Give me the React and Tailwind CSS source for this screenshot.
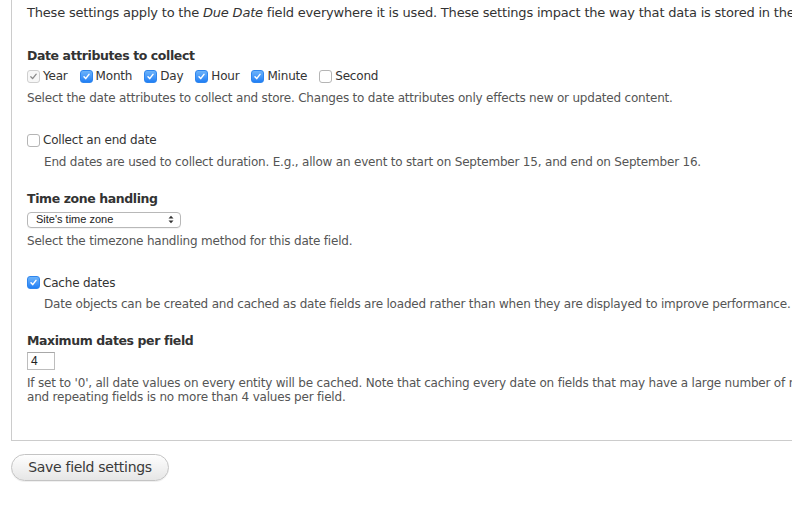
import React from "react"

function Box({ checked, disabled }) {
  if (checked && disabled) {
    return (
      <span className="inline-flex w-[13px] h-[13px] shrink-0 items-center justify-center rounded-[3px] border border-[#cfcfcf] bg-[#f7f7f7]">
        <svg width="9" height="9" viewBox="0 0 9 9">
          <path d="M1.8 4.8 L3.6 6.6 L7.2 2.2" fill="none" stroke="#8a8a8a" strokeWidth="1.3" strokeLinecap="round" strokeLinejoin="round" />
        </svg>
      </span>
    )
  }
  if (checked) {
    return (
      <span className="inline-flex w-[13px] h-[13px] shrink-0 items-center justify-center rounded-[3px] border border-[#2f86ee] bg-gradient-to-b from-[#6cb3fa] to-[#1f7ff5]">
        <svg width="9" height="9" viewBox="0 0 9 9">
          <path d="M2 4.8 L3.7 6.6 L7 2.4" fill="none" stroke="#fff" strokeWidth="1.5" strokeLinecap="round" strokeLinejoin="round" />
        </svg>
      </span>
    )
  }
  return <span className="inline-block w-[13px] h-[13px] shrink-0 rounded-[3px] border border-[#b5b5b5] bg-white" />
}

function Check({ label, checked, disabled }) {
  return (
    <span className="inline-flex items-center gap-[3px]">
      <Box checked={checked} disabled={disabled} />
      <span>{label}</span>
    </span>
  )
}

const ATTRS = [
  { label: "Year", checked: true, disabled: true },
  { label: "Month", checked: true },
  { label: "Day", checked: true },
  { label: "Hour", checked: true },
  { label: "Minute", checked: true },
  { label: "Second", checked: false },
]

export default function App() {
  return (
    <div className="h-[509px] overflow-hidden bg-white text-[#333] font-['Lucida_Grande','DejaVu_Sans',sans-serif] text-[12px] tracking-[-0.2px]">
      <div className="ml-[11px] border-l border-b border-[#cccccc] pl-[15px] pt-[4px] pb-[36px] whitespace-nowrap">
        <p className="text-[13px] leading-[18px]">
          These settings apply to the <em>Due Date</em> field everywhere it is used. These settings impact the way that data is stored in the database and cannot be changed once data has been created.
        </p>

        <h3 className="mt-[25px] text-[12.5px] leading-[18px] font-bold tracking-[-0.4px]">Date attributes to collect</h3>
        <div className="mt-[2px] flex items-center gap-[12px] leading-[18px]">
          {ATTRS.map(a => <Check key={a.label} {...a} />)}
        </div>
        <p className="mt-[4px] leading-[18px] text-[#555]">
          Select the date attributes to collect and store. Changes to date attributes only effects new or updated content.
        </p>

        <div className="mt-[24px] leading-[18px]">
          <Check label="Collect an end date" checked={false} />
        </div>
        <p className="mt-[1px] pl-[17px] leading-[18px] text-[#555]">
          End dates are used to collect duration. E.g., allow an event to start on September 15, and end on September 16.
        </p>

        <h3 className="mt-[19px] text-[12.5px] leading-[18px] font-bold tracking-[-0.4px]">Time zone handling</h3>
        <div className="mt-[4px] flex h-[16px] w-[154px] items-center justify-between rounded-[4px] border border-[#b8b8b8] bg-white pl-[8px] pr-[6px] font-['Liberation_Sans',sans-serif] text-[11px] tracking-normal text-[#222] shadow-[0_1px_0_rgba(0,0,0,0.04)]">
          <span>Site's time zone</span>
          <svg width="6" height="9" viewBox="0 0 6 9">
            <path d="M0.5 3.5 L3 0.8 L5.5 3.5 Z M0.5 5.5 L3 8.2 L5.5 5.5 Z" fill="#333" />
          </svg>
        </div>
        <p className="mt-[4px] leading-[18px] text-[#555]">
          Select the timezone handling method for this date field.
        </p>

        <div className="mt-[24px] leading-[18px]">
          <Check label="Cache dates" checked />
        </div>
        <p className="mt-[3px] pl-[17px] leading-[18px] text-[#555]">
          Date objects can be created and cached as date fields are loaded rather than when they are displayed to improve performance.
        </p>

        <h3 className="mt-[19px] text-[12.5px] leading-[18px] font-bold tracking-[-0.4px]">Maximum dates per field</h3>
        <div className="mt-[2px] flex h-[18px] w-[28px] items-center border border-[#bdbdbd] border-t-[#a8a8a8] pl-[3px] font-['Liberation_Sans',sans-serif] text-[12px] tracking-normal text-[#222]">
          4
        </div>
        <p className="mt-[6px] leading-[14px] text-[#555]">
          If set to '0', all date values on every entity will be cached. Note that caching every date on fields that may have a large number of multiple values
          <br />
          and repeating fields is no more than 4 values per field.
        </p>
      </div>

      <button className="block ml-[11px] mt-[13px] h-[27px] w-[158px] rounded-full border border-[#c4c4c4] bg-gradient-to-b from-[#fefefe] to-[#e6e6e6] text-[14px] tracking-[-0.3px] text-[#3a3a3a] shadow-[0_1px_0_rgba(0,0,0,0.06)]">
        Save field settings
      </button>
    </div>
  )
}
